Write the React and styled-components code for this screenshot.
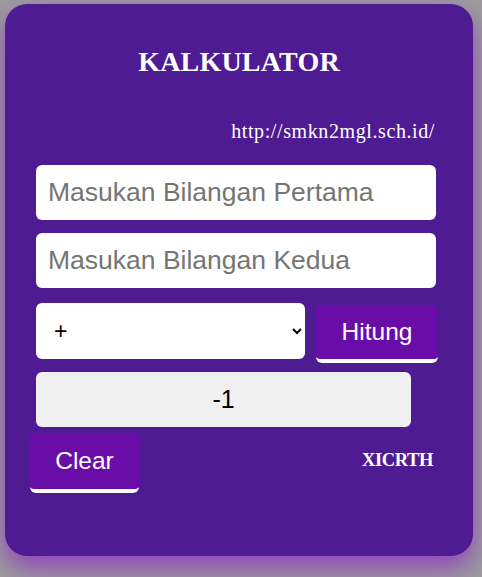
import styled, { createGlobalStyle } from "styled-components";

const Global = createGlobalStyle`
  html, body {
    margin: 0;
    padding: 0;
    background: #9c9c9c;
  }
  body {
    font-family: "Liberation Sans", Arial, sans-serif;
  }
`;

const Page = styled.div`
  padding: 4px 9px 22px 5px;
`;

const Card = styled.div`
  background: #4e1b93;
  border-radius: 22px;
  padding: 38px 34px 63px 25px;
  box-shadow: 0 12px 24px rgba(140, 40, 200, 0.75);
  display: flex;
  flex-direction: column;
`;

const Title = styled.h1`
  margin: 0;
  text-align: center;
  color: #fff;
  font-family: "Roboto Slab", "Liberation Serif", serif;
  font-weight: bold;
  font-size: 28px;
  letter-spacing: 0.2px;
  line-height: 40px;
  padding-left: 9px;
`;

const Link = styled.p`
  margin: 37px 4px 0 0;
  text-align: right;
  color: #fff;
  font-family: "Roboto Slab", "Liberation Serif", serif;
  font-size: 20px;
  letter-spacing: 0.6px;
  line-height: 24px;
`;

const Field = styled.input`
  box-sizing: border-box;
  width: ${(p) => p.$w || 400}px;
  height: 55px;
  margin: ${(p) => p.$top || 0}px 0 0 6px;
  border: none;
  border-radius: 6px;
  background: ${(p) => (p.readOnly ? "#f0f0f0" : "#fff")};
  padding: 0 12px;
  font-family: "Liberation Sans", Arial, sans-serif;
  font-size: ${(p) => (p.readOnly ? 25 : 26.5)}px;
  color: #000;
  text-align: ${(p) => (p.readOnly ? "center" : "left")};
  outline: none;

  &::placeholder {
    color: #757575;
  }
`;

const Stack = styled.div`
  margin-top: 22px;
  display: flex;
  flex-direction: column;
  gap: 13px;
`;

const Row = styled.div`
  display: flex;
  align-items: flex-start;
  gap: 11px;
  margin-left: 6px;
  margin-top: 2px;
`;

const Select = styled.select`
  box-sizing: border-box;
  width: 269px;
  height: 56px;
  border: none;
  border-radius: 6px;
  background: #fff;
  padding: 0 14px;
  font-family: "Liberation Sans", Arial, sans-serif;
  font-size: 23px;
  color: #000;
  outline: none;
`;

const Button = styled.button`
  box-sizing: border-box;
  width: ${(p) => p.$w}px;
  height: ${(p) => p.$h}px;
  margin-top: ${(p) => p.$top || 0}px;
  border: none;
  border-bottom: 4px solid #fff;
  border-radius: 6px;
  background: #6a0da8;
  color: #fff;
  font-family: "Liberation Sans", Arial, sans-serif;
  font-size: 24.5px;
  padding: 0;
  cursor: pointer;
`;

const Footer = styled.div`
  display: flex;
  justify-content: space-between;
  align-items: flex-start;
  margin-top: 6px;
`;

const Sign = styled.span`
  margin-top: 17px;
  margin-right: 6px;
  color: #fff;
  font-family: "Roboto Slab", "Liberation Serif", serif;
  font-weight: bold;
  font-size: 18.5px;
  letter-spacing: -0.4px;
`;

export default function App() {
  return (
    <Page>
      <Global />
      <Card>
        <Title>KALKULATOR</Title>
        <Link>http://smkn2mgl.sch.id/</Link>
        <Stack>
          <Field placeholder="Masukan Bilangan Pertama" />
          <Field placeholder="Masukan Bilangan Kedua" />
          <Row>
            <Select defaultValue="+">
              <option>+</option>
              <option>-</option>
              <option>*</option>
              <option>/</option>
            </Select>
            <Button $w={122} $h={58} $top={2}>Hitung</Button>
          </Row>
          <Field readOnly value="-1" $w={375} $top={-4} />
        </Stack>
        <Footer>
          <Button $w={109} $h={60}>Clear</Button>
          <Sign>XICRTH</Sign>
        </Footer>
      </Card>
    </Page>
  );
}
